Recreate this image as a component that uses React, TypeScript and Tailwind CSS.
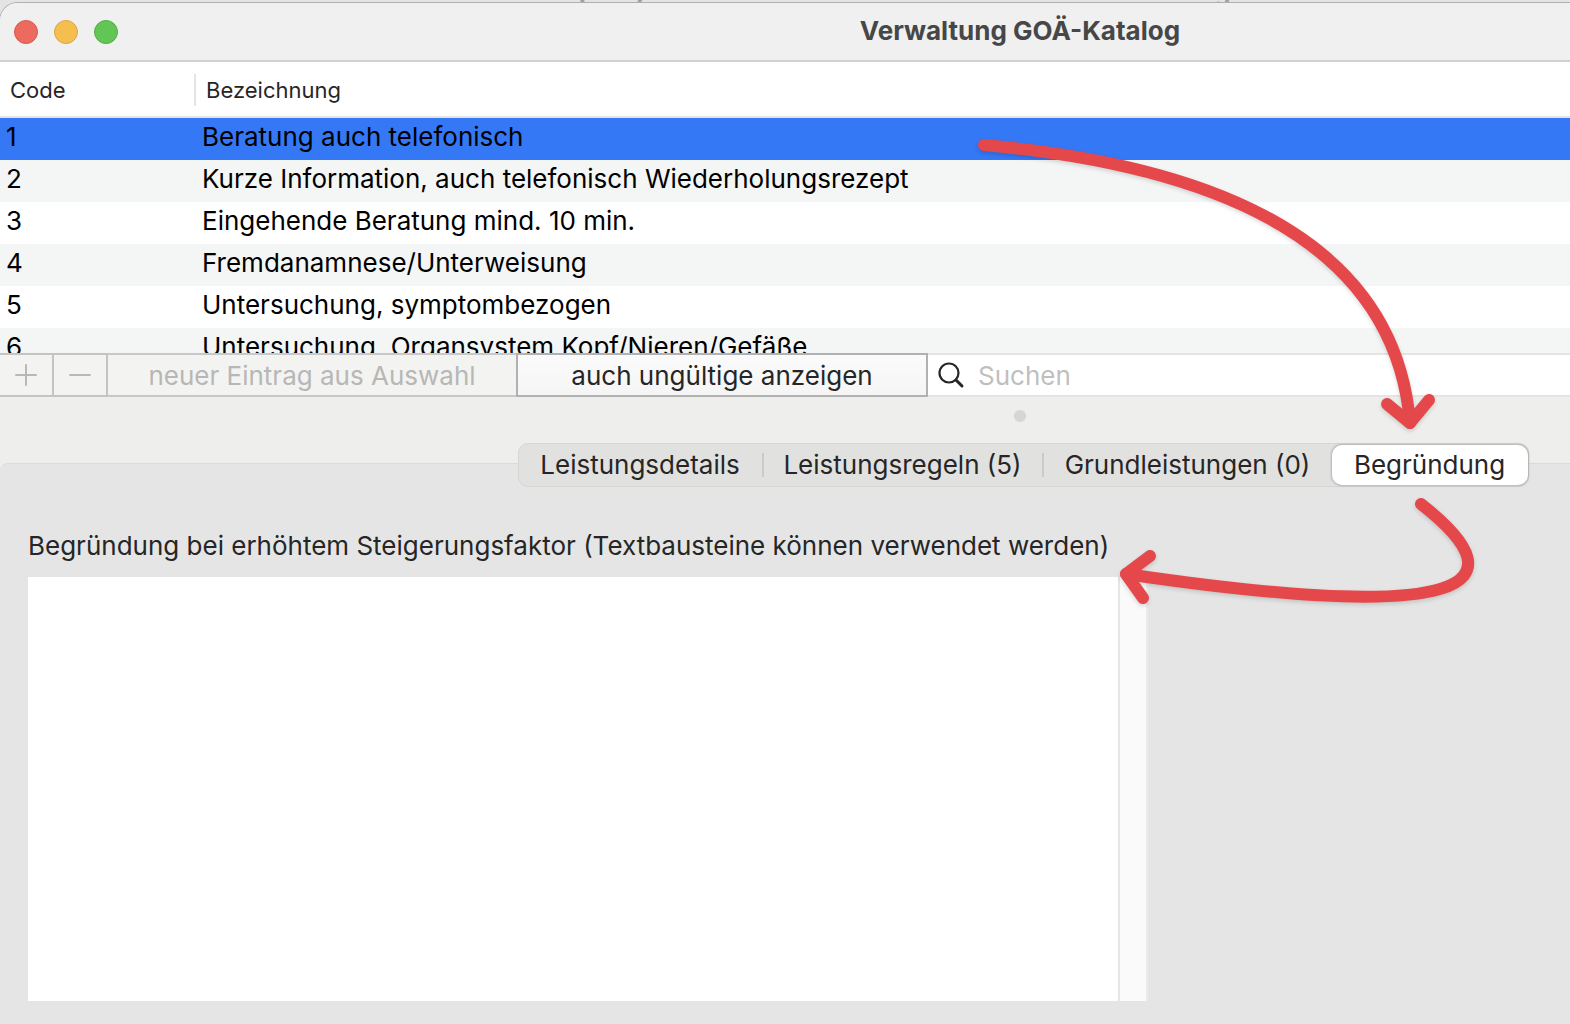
import React, { useState } from "react";

const rows = [
  { code: "1", label: "Beratung auch telefonisch" },
  { code: "2", label: "Kurze Information, auch telefonisch Wiederholungsrezept" },
  { code: "3", label: "Eingehende Beratung mind. 10 min." },
  { code: "4", label: "Fremdanamnese/Unterweisung" },
  { code: "5", label: "Untersuchung, symptombezogen" },
  { code: "6", label: "Untersuchung, Organsystem Kopf/Nieren/Gefäße" },
];

const tabs = [
  { label: "Leistungsdetails", width: "w-[245px]" },
  { label: "Leistungsregeln (5)", width: "w-[280px]" },
  { label: "Grundleistungen (0)", width: "w-[288px]" },
  { label: "Begründung", width: "w-[196px]" },
];

function BackgroundWindow() {
  return (
    <div className="flex h-[3px] items-end gap-[568px] overflow-hidden pl-[576px] text-[26px] leading-6 font-bold text-[#a0a0a0]">
      <span>(663)</span>
      <span>g</span>
    </div>
  );
}

function TitleBar() {
  return (
    <header className="flex h-[59px] items-center border-b-2 border-[#d1d1d1] bg-[#f0f0f0] pl-3.5">
      <div className="flex w-[456px] shrink-0 gap-4">
        <button aria-label="Schließen" className="size-6 rounded-full border border-[#d65a50] bg-[#ed6a5f]" />
        <button aria-label="Minimieren" className="size-6 rounded-full border border-[#d9a545] bg-[#f5bf4f]" />
        <button aria-label="Vergrößern" className="size-6 rounded-full border border-[#55ac46] bg-[#62c655]" />
      </div>
      <h1 className="flex-1 pb-0.5 text-center text-[26px] leading-8 font-bold text-[#474747]">
        Verwaltung GOÄ-Katalog
      </h1>
    </header>
  );
}

function Catalogue() {
  const [selected, setSelected] = useState("1");
  return (
    <div className="h-[291px] overflow-hidden bg-white">
      <table className="w-full table-fixed border-separate border-spacing-0 text-left">
        <thead>
          <tr className="text-[22px] text-[#262626]">
            <th className="h-14 w-[196px] border-b-2 border-[#e4e4e4] p-0 pt-0.5 font-normal">
              <div className="flex h-8 items-center border-r-2 border-[#e4e4e4] pl-2.5">Code</div>
            </th>
            <th className="h-14 border-b-2 border-[#e4e4e4] p-0 pt-0.5 pl-2.5 font-normal">Bezeichnung</th>
          </tr>
        </thead>
        <tbody className="text-[26px] text-black">
          {rows.map((row) => (
            <tr
              key={row.code}
              onClick={() => setSelected(row.code)}
              className={row.code === selected ? "h-[42px] bg-[#3478f6]" : "h-[42px] odd:bg-white even:bg-[#f4f5f5]"}
            >
              <td className="p-0 pb-1 pl-1.5 leading-[38px]">{row.code}</td>
              <td className="p-0 pb-1 pl-1.5 leading-[38px] whitespace-nowrap">{row.label}</td>
            </tr>
          ))}
        </tbody>
      </table>
    </div>
  );
}

function Toolbar() {
  return (
    <div className="flex h-11 text-[26px] leading-8">
      <button disabled aria-label="Hinzufügen" className="flex w-[54px] items-center justify-center border-y-2 border-r-2 border-[#c4c4c3] bg-[#f3f3f2]">
        <svg width="22" height="22" viewBox="0 0 22 22" stroke="#b8b8b7" strokeWidth="2" strokeLinecap="round">
          <path d="M11 1v20M1 11h20" />
        </svg>
      </button>
      <button disabled aria-label="Entfernen" className="flex w-[54px] items-center justify-center border-y-2 border-r-2 border-[#c4c4c3] bg-[#f3f3f2]">
        <svg width="22" height="22" viewBox="0 0 22 22" stroke="#b8b8b7" strokeWidth="2" strokeLinecap="round">
          <path d="M1 11h20" />
        </svg>
      </button>
      <button disabled className="w-[408px] border-y-2 border-[#c8c8c7] bg-[#f3f3f2] pt-0.5 text-[#b7b7b6]">
        neuer Eintrag aus Auswahl
      </button>
      <button className="w-[412px] border-2 border-[#b1b1b1] bg-linear-to-b from-[#fbfbfb] to-[#f5f5f5] pt-0.5 text-[#262626]">
        auch ungültige anzeigen
      </button>
      <label className="flex flex-1 items-center gap-3 border-y-2 border-[#e4e4e3] bg-white pl-2.5">
        <svg width="28" height="28" viewBox="0 0 28 28" fill="none" stroke="#262626" strokeLinecap="round">
          <circle cx="11" cy="12" r="9.5" strokeWidth="2.2" />
          <path d="M18 19l6 6" strokeWidth="3" />
        </svg>
        <input
          type="search"
          aria-label="Suchen"
          placeholder="Suchen"
          className="min-w-0 flex-1 bg-transparent pt-0.5 outline-none placeholder:text-[#bfbfbf]"
        />
      </label>
    </div>
  );
}

function Details() {
  const [active, setActive] = useState(3);
  return (
    <section className="flex-1 rounded-tl-lg border-t border-[#dbdbda] bg-[#e5e5e5] pb-[23px]">
      <div className="-mt-[21px] flex justify-center pl-[476px]">
        <div role="tablist" className="flex h-11 items-center rounded-[10px] border border-[#d6d6d5] bg-[#e1e1df] text-[26px] text-[#262626]">
          {tabs.map((tab, i) => (
            <button
              key={tab.label}
              role="tab"
              aria-selected={i === active}
              onClick={() => setActive(i)}
              className={
                i === active
                  ? "h-10 rounded-[10px] bg-white leading-10 shadow-[0_0_2px_1px_rgba(0,0,0,0.2)] " + tab.width
                  : "flex h-10 items-center leading-10 " + tab.width
              }
            >
              <span className="flex-1">{tab.label}</span>
              {i < active - 1 && <span className="h-6 w-0.5 bg-[#cbcbca]" />}
            </button>
          ))}
        </div>
      </div>
      <label htmlFor="reason" className="mt-[43px] block pl-7 text-[26px] leading-8 text-[#262626]">
        Begründung bei erhöhtem Steigerungsfaktor (Textbausteine können verwendet werden)
      </label>
      <div className="mt-[15px] mr-[422px] ml-7 flex h-[424px]">
        <textarea id="reason" className="block flex-1 resize-none bg-white outline-none" />
        <div className="w-[30px] border-x-2 border-l-[#e6e6e6] border-r-[#ebebeb] bg-[#fafafa]" />
      </div>
    </section>
  );
}

function Arrows() {
  return (
    <svg
      className="pointer-events-none absolute top-0 left-0 drop-shadow-[0_2px_2px_rgba(0,0,0,0.15)]"
      width="1570"
      height="640"
      viewBox="0 0 1570 640"
      fill="none"
      stroke="#e5484b"
      strokeWidth="12"
      strokeLinecap="round"
      strokeLinejoin="round"
      aria-hidden="true"
    >
      <path d="M984 145Q1390 182 1410 423" />
      <path d="M1387 404L1410 423L1429 400" />
      <path d="M1421 504C1527 587 1465 624 1126 574" />
      <path d="M1150 556L1126 574L1143 598" />
    </svg>
  );
}

export default function App() {
  return (
    <div className="relative flex min-h-screen flex-col overflow-hidden bg-[#e4e4e4] font-['Inter',sans-serif]">
      <BackgroundWindow />
      <main className="flex flex-1 flex-col overflow-hidden rounded-tl-[18px] bg-[#eeeeec] shadow-[0_0_0_1px_#b0b0b0]">
        <TitleBar />
        <Catalogue />
        <Toolbar />
        <div className="flex h-[66px] justify-center pt-[13px] pl-[470px]">
          <div className="size-3 rounded-full bg-[#d6d6d5]" />
        </div>
        <Details />
      </main>
      <Arrows />
    </div>
  );
}
